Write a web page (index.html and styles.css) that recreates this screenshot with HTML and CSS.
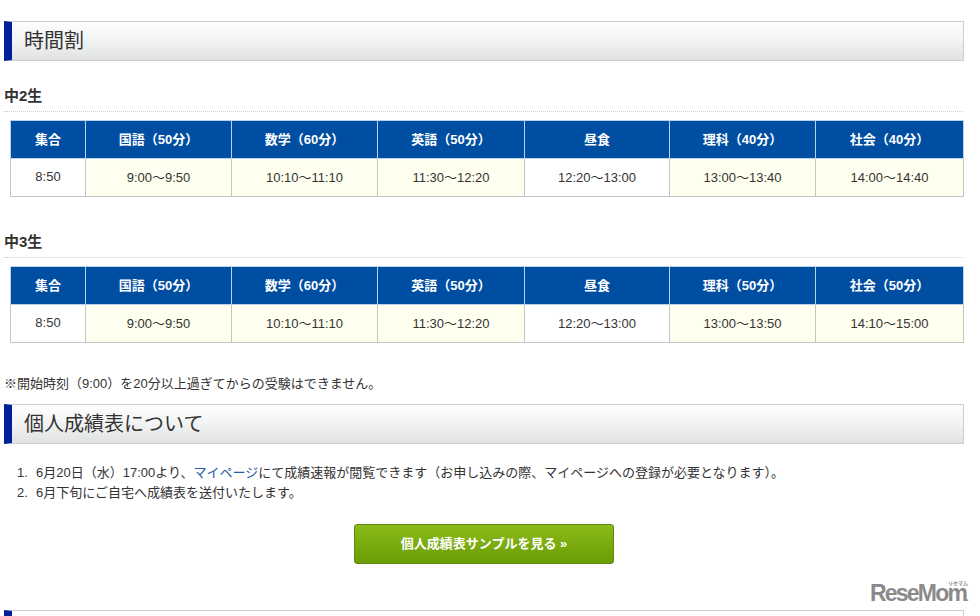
FILE: index.html
```html
<!DOCTYPE html>
<html lang="ja">
<head>
<meta charset="utf-8">
<title>時間割</title>
<link rel="stylesheet" href="styles.css">
</head>
<body>
<main class="page">
  <h2 class="bar">時間割</h2>
  <h3 class="sub sub-first">中2生</h3>
  <table class="tt">
    <colgroup><col class="c0"><col class="c1"><col class="c2"><col class="c3"><col class="c4"><col class="c5"><col class="c6"></colgroup>
    <tr><th>集合</th><th>国語（50分）</th><th>数学（60分）</th><th>英語（50分）</th><th>昼食</th><th>理科（40分）</th><th>社会（40分）</th></tr>
    <tr><td>8:50</td><td class="exam">9:00〜9:50</td><td class="exam">10:10〜11:10</td><td class="exam">11:30〜12:20</td><td>12:20〜13:00</td><td class="exam">13:00〜13:40</td><td class="exam">14:00〜14:40</td></tr>
  </table>
  <h3 class="sub sub-second">中3生</h3>
  <table class="tt">
    <colgroup><col class="c0"><col class="c1"><col class="c2"><col class="c3"><col class="c4"><col class="c5"><col class="c6"></colgroup>
    <tr><th>集合</th><th>国語（50分）</th><th>数学（60分）</th><th>英語（50分）</th><th>昼食</th><th>理科（50分）</th><th>社会（50分）</th></tr>
    <tr><td>8:50</td><td class="exam">9:00〜9:50</td><td class="exam">10:10〜11:10</td><td class="exam">11:30〜12:20</td><td>12:20〜13:00</td><td class="exam">13:00〜13:50</td><td class="exam">14:10〜15:00</td></tr>
  </table>
  <p class="note">※開始時刻（9:00）を20分以上過ぎてからの受験はできません。</p>
  <h2 class="bar">個人成績表について</h2>
  <ol class="list">
    <li>6月20日（水）17:00より、<a href="#">マイページ</a>にて成績速報が閲覧できます（お申し込みの際、マイページへの登録が必要となります）。</li>
    <li>6月下旬にご自宅へ成績表を送付いたします。</li>
  </ol>
  <div class="cta"><a class="btn" href="#">個人成績表サンプルを見る »</a></div>
  <div class="bar bar-next"></div>
</main>
<div class="mark"><span class="mark-ruby">リセマム</span>ReseMom<span class="mark-dot">.</span></div>
</body>
</html>
```
FILE: styles.css
```css
html, body {
  margin: 0;
  height: 616px;
  overflow: hidden;
  background: #fff;
}
body {
  font-family: "Liberation Sans", "Noto Sans CJK JP", sans-serif;
  font-size: 13px;
  color: #333;
}
.page {
  width: 960px;
  padding: 21px 0 0 4px;
}
.bar {
  box-sizing: border-box;
  height: 40px;
  margin: 0;
  padding-left: 12px;
  border: 1px solid #ccc;
  border-left: 8px solid #00209a;
  background: linear-gradient(#fdfdfd, #f3f4f4 45%, #e0e1e1);
  font-size: 20px;
  font-weight: 400;
  line-height: 38px;
  color: #333;
}
.sub {
  box-sizing: border-box;
  height: 25px;
  margin: 0;
  border-bottom: 1px dotted #ccc;
  font-size: 15px;
  font-weight: 700;
  line-height: 18px;
  color: #333;
}
.sub-first { margin-top: 26px; margin-bottom: 8px; }
.sub-second { margin-top: 36px; margin-bottom: 8px; }
.tt {
  width: 953px;
  margin-left: 6px;
  table-layout: fixed;
  border-collapse: collapse;
}
.c0 { width: 75px; }
.c1, .c2, .c5 { width: 146px; }
.c3 { width: 147px; }
.c4 { width: 145px; }
.c6 { width: 148px; }
.tt th, .tt td {
  height: 38px;
  padding: 0 0 2px;
  text-align: center;
  font-size: 13px;
}
.tt th {
  box-sizing: border-box;
  border: 1px solid #b9d2e8;
  background: #004ea2;
  color: #fff;
  font-weight: 700;
}
.tt td {
  box-sizing: border-box;
  border: 1px solid #c4c4c4;
  background: #fff;
  color: #333;
}
.tt td.exam { background: #fffff0; }
.note {
  margin: 32px 0 12px;
  font-size: 13px;
  line-height: 17px;
}
.list {
  margin: 19px 0 0;
  padding: 0 0 0 13px;
  list-style: none;
  counter-reset: item;
  font-size: 13px;
  line-height: 20px;
}
.list li { counter-increment: item; }
.list li::before {
  content: counter(item) ".";
  display: inline-block;
  width: 19px;
}
.list a { color: #1e5aa8; text-decoration: none; }
.cta {
  display: flex;
  justify-content: center;
  margin-top: 21px;
}
.btn {
  box-sizing: border-box;
  display: block;
  width: 260px;
  height: 40px;
  border: 1px solid #5f8a10;
  border-radius: 3px;
  background: linear-gradient(#8bbb1a, #6a9c04);
  color: #fff;
  font-size: 13px;
  font-weight: 700;
  line-height: 38px;
  text-align: center;
  text-decoration: none;
}
.bar-next {
  height: 6px;
  margin-top: 46px;
  border-bottom: 0;
  background: #fdfdfd;
}
.mark {
  position: absolute;
  left: 870px;
  top: 585px;
  width: 104px;
  font-size: 23px;
  font-weight: 700;
  line-height: 17px;
  letter-spacing: -1.8px;
  color: #8a8a8a;
}
.mark-ruby {
  position: absolute;
  left: 78px;
  top: -4px;
  font-size: 5px;
  line-height: 5px;
  letter-spacing: 0;
}
.mark-dot { font-size: 10px; }
```
